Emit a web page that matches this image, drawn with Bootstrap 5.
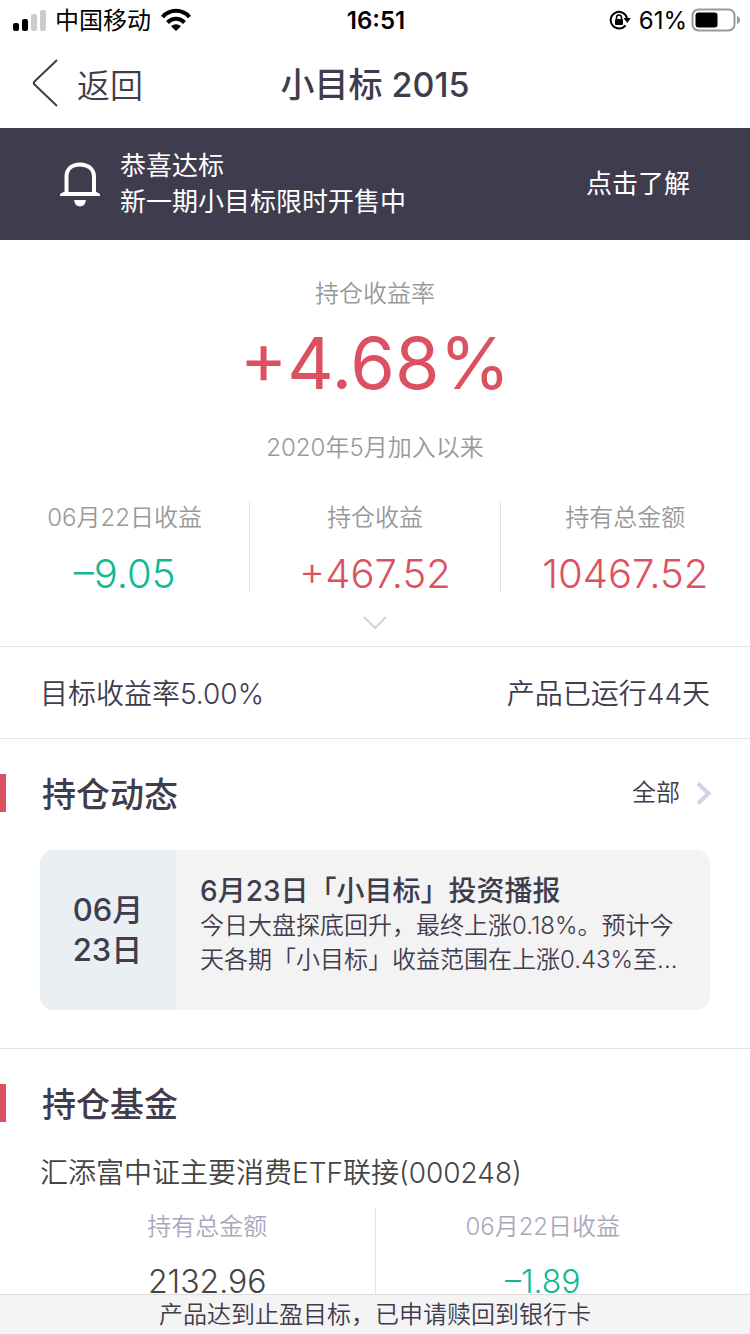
<!DOCTYPE html>
<html lang="zh-CN">
<head>
<meta charset="utf-8">
<meta name="viewport" content="width=device-width, initial-scale=1">
<title>小目标 2015</title>
<link href="https://cdn.jsdelivr.net/npm/bootstrap@5.3.0/dist/css/bootstrap.min.css" rel="stylesheet">
<style>
  :root { --ink: #3f3c4e; --rise: #dc5161; --fall: #0fb993; --rule: #e4e4e4; }
  body { font-family: Inter, "Noto Sans CJK SC", sans-serif; font-size: 24px; line-height: 32px; color: var(--ink); background: #fff; }
  h1, h2, h3, p, dl, dt, dd { margin: 0; font-weight: inherit; line-height: inherit; }
  svg { display: block; flex: none; }
  a { color: inherit; text-decoration: none; }
  .status { height: 40px; padding: 2px 10px 0 12px; color: #000; }
  .status-side { flex: 1 1 0; }
  .status-side svg { margin-top: -2px; }
  .clock { font-weight: 600; font-size: 24px; }
  .titlebar { height: 88px; padding: 0 32px; }
  .titlebar h1 { font-size: 34px; font-weight: 500; line-height: 44px; padding-top: 2px; }
  .back { gap: 19px; font-size: 33px; font-weight: 350; line-height: 44px; color: inherit; }
  .back span { padding-top: 3px; }
  .notice { background: var(--ink); color: #fff; padding: 20px 60px; gap: 20px; font-size: 26px; line-height: 36px; }
  .hero { padding: 38px 0 16px; border-bottom: 1px solid var(--rule); }
  .label { color: #999; font-weight: 350; font-size: 24px; line-height: 32px; }
  .rate { font-size: 72px; line-height: 80px; margin: 13px 0 29px; }
  .stats { margin-top: 38px; }
  .stat + .stat { border-left: 1px solid var(--rule); }
  .stat dd { font-size: 40px; font-weight: 300; line-height: 36px; margin-top: 22px; }
  .rise { color: var(--rise); }
  .fall { color: var(--fall); }
  .goal { padding: 26px 40px 22px; font-size: 28px; font-weight: 350; line-height: 43px; border-bottom: 1px solid var(--rule); }
  .block-head { padding: 0 38px 0 36px; border-left: 6px solid var(--rise); line-height: 38px; }
  .block-head h2 { font-size: 34px; font-weight: 500; line-height: 34px; padding-top: 4px; }
  .dynamics { padding: 35px 0 38px; border-bottom: 1px solid var(--rule); }
  .all-link { font-size: 24px; font-weight: 350; }
  .news { margin: 38px 40px 0; border-radius: 14px; background: #f3f3f3; overflow: hidden; min-height: 160px; }
  .news-date { flex: 0 0 136px; background: #eaeff4; font-size: 31px; font-weight: 500; line-height: 40px; }
  .news-text { padding: 23px 24px; min-width: 0; }
  .news-text h3 { font-size: 28px; font-weight: 500; line-height: 36px; }
  .news-text p { font-weight: 350; line-height: 34px; }
  .funds { padding: 35px 0 32px; }
  .fund-name { margin: 32px 40px 16px; font-size: 28px; font-weight: 350; line-height: 38px; color: #444; }
  .holdings { margin: 0 40px; }
  .holding { padding-top: 3px; }
  .holding + .holding { border-left: 1px solid var(--rule); }
  .holding .label { color: #aaa8bd; }
  .holding dd { font-size: 32px; font-weight: 350; line-height: 40px; margin-top: 19px; }
  .black { color: #444; }
  .toast-bar { background: #f4f4f4; border-top: 1px solid #ddd; line-height: 39px; font-weight: 350; }
</style>
</head>
<body>
<header>
  <div class="status d-flex align-items-center">
    <div class="status-side d-flex align-items-center">
      <svg width="35" height="22" viewBox="0 0 35 22"><rect x="1" y="14" width="6" height="8" rx="2"/><rect x="10" y="10" width="6" height="12" rx="2"/><g fill="#ccc"><rect x="19" y="5" width="6" height="17" rx="2"/><rect x="28" y="1" width="6" height="21" rx="2"/></g></svg>
      <span class="ms-2">中国移动</span>
      <svg class="ms-2" width="34" height="24" viewBox="0 0 34 24" fill="none" stroke="#000" stroke-width="4"><path d="M3.500 9 C11 .8 23 .8 30.500 9"/><path d="M8.500 14.500 C13.500 9.500 20.500 9.500 25.500 14.500"/><path d="M12 18.300 C15 15.500 19 15.500 22 18.300 L17 23Z" fill="#000" stroke="none"/></svg>
    </div>
    <span class="clock">16:51</span>
    <div class="status-side d-flex align-items-center justify-content-end">
      <svg width="22" height="20" viewBox="0 0 22 20"><path d="M16.500 15.300 A8.300 8.300 0 1 1 18 8" fill="none" stroke="#000" stroke-width="2"/><path d="M14.500 8 H21.800 L18.300 13Z"/><rect x="6" y="9" width="8" height="6" rx="1"/><path d="M7.500 9 V7.500 a2.500 2.500 0 0 1 5 0 V9" fill="none" stroke="#000" stroke-width="1.500"/></svg>
      <span class="ms-2">61%</span>
      <svg class="ms-1" width="49" height="24" viewBox="0 0 49 24"><rect x="1.500" y="1.500" width="42" height="21" rx="6" fill="none" stroke="#999" stroke-width="2"/><rect x="4.500" y="4.500" width="22" height="15" rx="3"/><path d="M46 8 q3 1 3 4 t-3 4Z" fill="#999"/></svg>
    </div>
  </div>
  <nav class="titlebar d-flex align-items-center">
    <div class="status-side">
      <button type="button" class="back btn border-0 p-0 d-flex align-items-center">
        <svg width="26" height="48" viewBox="0 0 26 48" fill="none" stroke="#3f3c4e" stroke-width="2"><path d="M25 1 L2.500 22.500 Q1 24 2.500 25.500 L25 47"/></svg>
        <span>返回</span>
      </button>
    </div>
    <h1>小目标 2015</h1>
    <div class="status-side"></div>
  </nav>
</header>
<main>
  <a href="#offer" class="notice d-flex align-items-center">
    <svg width="40" height="46" viewBox="0 0 40 46"><path d="M6.500 32 V16 C6.500 7.500 12.500 3.500 20 3.500 S34 7.500 34 16 V32" fill="none" stroke="#fff" stroke-width="4"/><path d="M3.500 31 H36.500 L40 33 V35 H0 V33Z M14 39 H26 Q25 45.500 20 45.500 T14 39Z" fill="#fff"/></svg>
    <span class="flex-grow-1">恭喜达标<br>新一期小目标限时开售中</span>
    <span>点击了解</span>
  </a>
  <section class="hero text-center">
    <p class="label">持仓收益率</p>
    <p class="rate rise">+4.68%</p>
    <p class="label">2020年5月加入以来</p>
    <dl class="stats row g-0">
      <div class="stat col"><dt class="label">06月22日收益</dt><dd class="fall">–9.05</dd></div>
      <div class="stat col"><dt class="label">持仓收益</dt><dd class="rise">+467.52</dd></div>
      <div class="stat col"><dt class="label">持有总金额</dt><dd class="rise">10467.52</dd></div>
    </dl>
    <button type="button" class="btn border-0 p-0 d-block mx-auto mt-4" aria-label="展开">
      <svg width="24" height="14" viewBox="0 0 24 14" fill="none" stroke="#d3d1e3" stroke-width="2"><path d="M1 1 L12 12 L23 1"/></svg>
    </button>
  </section>
  <div class="goal d-flex justify-content-between"><span>目标收益率5.00%</span><span>产品已运行44天</span></div>
  <section class="dynamics">
    <div class="block-head d-flex align-items-center justify-content-between">
      <h2>持仓动态</h2>
      <a href="#all" class="all-link d-flex align-items-center">全部
        <svg class="ms-3" width="16" height="24" viewBox="0 0 16 24" fill="none" stroke="#d3d1e3" stroke-width="4"><path d="M2 2.500 L12.500 12.500 L2 22.500"/></svg>
      </a>
    </div>
    <a href="#news" class="news d-flex">
      <div class="news-date d-flex align-items-center justify-content-center">06月<br>23日</div>
      <div class="news-text">
        <h3>6月23日「小目标」投资播报</h3>
        <p>今日大盘探底回升，最终上涨0.18%。预计今天各期「小目标」收益范围在上涨0.43%至...</p>
      </div>
    </a>
  </section>
  <section class="funds">
    <div class="block-head"><h2>持仓基金</h2></div>
    <h3 class="fund-name">汇添富中证主要消费ETF联接(000248)</h3>
    <dl class="holdings row g-0 text-center">
      <div class="holding col"><dt class="label">持有总金额</dt><dd class="black">2132.96</dd></div>
      <div class="holding col"><dt class="label">06月22日收益</dt><dd class="fall">–1.89</dd></div>
    </dl>
  </section>
</main>
<footer class="toast-bar fixed-bottom text-center">产品达到止盈目标，已申请赎回到银行卡</footer>
<script src="https://cdn.jsdelivr.net/npm/bootstrap@5.3.0/dist/js/bootstrap.bundle.min.js"></script>
</body>
</html>
